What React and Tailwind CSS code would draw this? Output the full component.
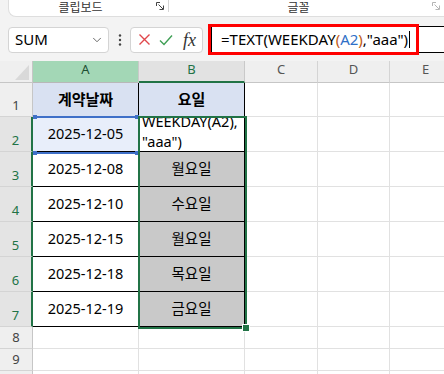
import React from 'react';
import { ChevronDown } from 'lucide-react';

const COLS = [
  { w: 'w-[106px]', label: 'A', cls: 'bg-[#a3d7b6] text-[#1d4f33] border-r border-r-[#c9c9c9] border-b border-b-[#b8b8b8]' },
  { w: 'w-[106px]', label: 'B', cls: 'bg-[#e2e2e2] text-[#217346] border-r border-r-[#c9c9c9] border-b-2 border-b-[#217346]' },
  { w: 'w-[73px]', label: 'C', cls: 'bg-[#efefef] text-[#555] border-r border-r-[#d4d4d4] border-b border-b-[#c6c6c6]' },
  { w: 'w-[72px]', label: 'D', cls: 'bg-[#efefef] text-[#555] border-r border-r-[#d4d4d4] border-b border-b-[#c6c6c6]' },
  { w: 'w-[72px]', label: 'E', cls: 'bg-[#efefef] text-[#555] border-r border-r-[#d4d4d4] border-b border-b-[#c6c6c6]' },
];

const ROWS = [
  { n: 1, h: 'h-[34px]', a: '계약날짜', b: '요일', head: true },
  { n: 2, h: 'h-[35px]', a: '2025-12-05', formula: true },
  { n: 3, h: 'h-[35px]', a: '2025-12-08', b: '월요일' },
  { n: 4, h: 'h-[35px]', a: '2025-12-10', b: '수요일' },
  { n: 5, h: 'h-[35px]', a: '2025-12-15', b: '월요일' },
  { n: 6, h: 'h-[35px]', a: '2025-12-18', b: '목요일' },
  { n: 7, h: 'h-[35px]', a: '2025-12-19', b: '금요일' },
  { n: 8, h: 'h-[22px]' },
  { n: 9, h: 'h-[22px]' },
  { n: 10, h: 'h-[22px]' },
];

const Launcher = ({ dim }) => (
  <svg width="10" height="10" viewBox="0 0 10 10" fill="none" stroke={dim ? '#b5b5b5' : '#444'} strokeWidth="1">
    <path d="M1.5 5V1.5H5" />
    <path d="M3.5 3.5L8 8" />
    <path d="M8.5 4.5V8.5H4.5" />
  </svg>
);

const Gridline = 'border-r border-b border-[#e1e1e1]';

function Row({ row }) {
  const sel = row.n >= 2 && row.n <= 7;
  const table = row.n <= 7;
  const edge = table ? 'border-r border-b border-black' : Gridline;
  return (
    <div className={`flex ${row.h}`}>
      <div
        className={`w-[33px] shrink-0 flex items-end justify-center pb-[3px] text-[13px] leading-[16px] border-b border-b-[#d4d4d4] ${
          sel ? 'bg-[#e4e4e4] text-[#217346] border-r-2 border-r-[#217346]' : 'bg-[#efefef] text-[#444] border-r border-r-[#c6c6c6]'
        }`}
      >
        {row.n}
      </div>
      <div
        className={`w-[106px] shrink-0 flex items-center justify-center ${edge} ${
          row.head ? 'bg-[#d9e1f2] font-bold text-[15px]' : row.n === 2 ? 'bg-[#e8eefa] text-[14.5px]' : 'bg-white text-[14.5px]'
        }`}
      >
        {row.a}
      </div>
      {row.formula ? (
        <div className={`w-[106px] shrink-0 flex flex-col justify-end overflow-hidden px-[3px] text-[14.5px] leading-[20px] bg-white ${edge}`}>
          <div className="shrink-0">WEEKDAY(A2),</div>
          <div className="shrink-0">"aaa")</div>
        </div>
      ) : (
        <div
          className={`w-[106px] shrink-0 flex items-center justify-center ${edge} ${
            row.head ? 'bg-[#d9e1f2] font-bold text-[15px]' : table ? 'bg-[#c9c9c9] text-[14.5px]' : 'bg-white'
          }`}
        >
          {row.b}
        </div>
      )}
      <div className={`w-[73px] shrink-0 bg-white ${Gridline}`} />
      <div className={`w-[72px] shrink-0 bg-white ${Gridline}`} />
      <div className={`w-[72px] shrink-0 bg-white ${Gridline}`} />
    </div>
  );
}

export default function App() {
  return (
    <div className="w-[444px] h-[374px] overflow-hidden bg-[#f3f3f3] text-black font-['Noto_Sans','Noto_Sans_CJK_KR',sans-serif] relative">
      {/* ribbon group labels */}
      <div className="h-[17px] pl-[8px]">
        <div className="h-[17px] flex bg-white border-l border-b border-[#dedede] rounded-bl-[8px] text-[12px] leading-[14px] text-[#333] font-['Noto_Sans_CJK_KR',sans-serif]">
          <div className="w-[143px] flex items-center justify-center pb-[2px]">클립보드</div>
          <div className="w-[16px] flex items-center justify-center pb-[4px]">
            <Launcher />
          </div>
          <div className="w-px h-[12px] bg-[#d6d6d6]" />
          <div className="w-[259px] flex items-center justify-center pb-[2px]">글꼴</div>
          <div className="w-[16px] flex items-center justify-center pb-[4px]">
            <Launcher dim />
          </div>
        </div>
      </div>

      {/* formula bar */}
      <div className="mt-[7px] h-[31px] flex items-center pl-[8px]">
        <div className="w-[101px] h-[26px] bg-white border border-[#d4d4d4] rounded-[4px] flex items-center justify-between pl-[6px] pr-[4px] text-[15px]">
          <span>SUM</span>
          <ChevronDown size={14} strokeWidth={1.5} className="text-[#555]" />
        </div>
        <div className="w-[21px] flex justify-center">
          <svg width="4" height="12" viewBox="0 0 4 12" fill="#444">
            <circle cx="2" cy="1.5" r="1.2" />
            <circle cx="2" cy="6" r="1.2" />
            <circle cx="2" cy="10.5" r="1.2" />
          </svg>
        </div>
        <div className="w-[73px] h-[26px] bg-white border border-[#d4d4d4] rounded-[4px] flex items-center pl-[7px] gap-[8px]">
          <svg width="13" height="13" viewBox="0 0 13 13" stroke="#e0474c" strokeWidth="1.4" fill="none">
            <path d="M1.5 1.5L11.5 11.5M11.5 1.5L1.5 11.5" />
          </svg>
          <svg width="14" height="12" viewBox="0 0 14 12" stroke="#3f9f55" strokeWidth="1.4" fill="none">
            <path d="M1 6.5L5 10.5L13 1.5" />
          </svg>
          <span className="font-['Liberation_Serif',serif] italic text-[18px] leading-none text-[#333] ml-[2px]">fx</span>
        </div>
        <div className="ml-[8px] flex-1 h-[27px] bg-white border border-black border-r-0 flex items-center pl-[9px] text-[15px] whitespace-nowrap">
          <span>=TEXT(WEEKDAY</span>
          <span className="text-[#c05a16]">(</span>
          <span className="text-[#2f6fc7]">A2</span>
          <span className="text-[#c05a16]">)</span>
          <span>,"aaa")</span>
          <span className="inline-block w-px h-[17px] bg-black ml-[1px]" />
        </div>
      </div>
      <div className="absolute left-[208px] top-[24px] w-[211px] h-[31px] border-[3px] border-[#ff0000]" />

      {/* sheet */}
      <div className="mt-[6px] relative">
        <div className="flex h-[22px] w-max">
          <div className="w-[33px] shrink-0 bg-[#efefef] border-r border-r-[#c6c6c6] border-b border-b-[#c6c6c6] flex items-end justify-end pr-[3px] pb-[2px]">
            <svg width="14" height="15" viewBox="0 0 14 15">
              <path d="M14 0V15H0Z" fill="#d9d9d9" />
            </svg>
          </div>
          {COLS.map((c) => (
            <div key={c.label} className={`${c.w} shrink-0 flex items-center justify-center pb-[3px] text-[13px] ${c.cls}`}>
              {c.label}
            </div>
          ))}
        </div>
        <div className="w-max">
          {ROWS.map((r) => (
            <Row key={r.n} row={r} />
          ))}
        </div>

        {/* reference box around A2 */}
        <div className="absolute left-[33px] top-[55px] w-[106px] h-[38px] border-t-2 border-b-2 border-[#3f70c8]" />
        <div className="absolute left-[33px] top-[54px] w-[4px] h-[4px] bg-[#3f70c8]" />
        <div className="absolute left-[135px] top-[54px] w-[4px] h-[4px] bg-[#3f70c8]" />
        <div className="absolute left-[33px] top-[90px] w-[4px] h-[4px] bg-[#3f70c8]" />
        <div className="absolute left-[135px] top-[90px] w-[4px] h-[4px] bg-[#3f70c8]" />

        {/* selection B2:B7 */}
        <div className="absolute left-[138px] top-[55px] w-[109px] h-[213px] border-2 border-[#217346]" />
        <div className="absolute left-[242px] top-[263px] w-[8px] h-[8px] bg-[#217346] border border-white" />
      </div>
    </div>
  );
}
